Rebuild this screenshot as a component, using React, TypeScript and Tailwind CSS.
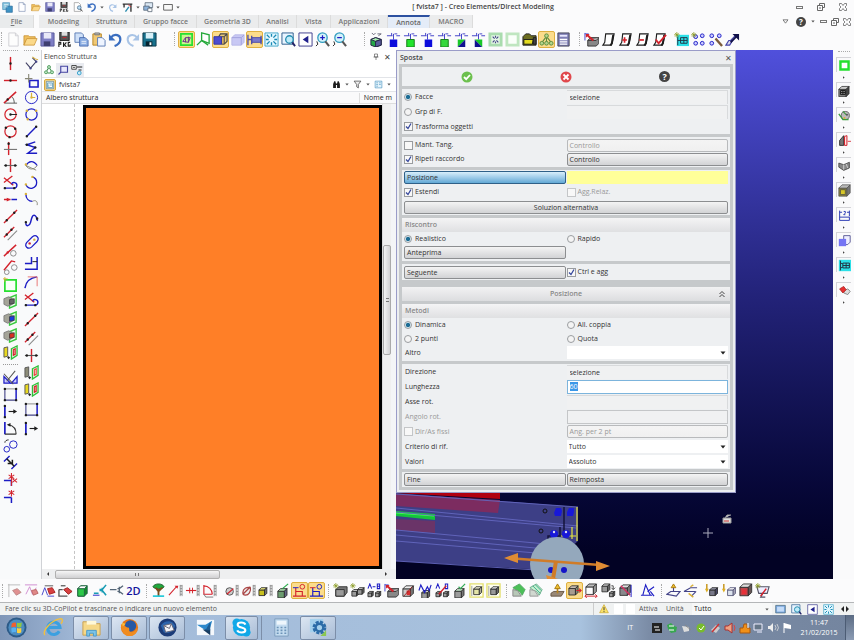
import type { ReactNode } from "react";

/* A shape is [path, stroke, fill, stroke width] on a 16 x 16 grid. */
type Shape = [string, string?, string?, number?];

const R = "#d3222c";
const B = "#1c1cc4";
const K = "#1d1d1d";
const G = "#25e02f";
const Y = "#d9b13a";
const N = "none";

const o = (x: number, y: number, r: number) =>
  `M${x - r} ${y}a${r} ${r} 0 1 0 ${2 * r} 0a${r} ${r} 0 1 0 ${-2 * r} 0`;
const dot = (x: number, y: number, c = K): Shape => [o(x, y, 1.3), N, c];
const box = (x: number, y: number, w: number, h: number) => `M${x} ${y}h${w}v${h}h${-w}z`;
const cube = (x: number, y: number, s: number, front = "#9a9a9a", top = "#d0d0d0", side = "#666", line = "#2a2a2a"): Shape[] => {
  const d = s * 0.4;
  return [
    [box(x, y + d, s, s), line, front, 0.9],
    [`M${x} ${y + d}l${d} ${-d}h${s}l${-d} ${d}z`, line, top, 0.9],
    [`M${x + s} ${y + d}l${d} ${-d}v${s}l${-d} ${d}z`, line, side, 0.9],
  ];
};
const rail: Shape[] = [["M13 2v12M15 2v12M13 3h2M13 6h2M13 9h2M13 12h2", "#777", N, 0.8]];
const axes: Shape = ["M1 4h6M6 1v3M9 2h3M11 4h4M8 2v6", "#3c3cc8", N, 1];
const sheet: Shape[] = [
  ["M5 2h9l-2 10-1 2H2l2-3z", K, "#fff", 1.2],
  ["M13 3l-1.500 9-1.500 2.500", K, N, 2],
];
const spark: Shape = ["M3 0v6M0 3h6M1 1l4 4M5 1l-4 4", "#8a9a20", N, 0.8];
const frame3d = (c: string): Shape[] => [
  ["M7 4l7-3v11l-7 3z", "#37c93d", "#e8ffe8", 1.5],
  ["M1 5l5-2 4 2v6l-5 2-4-2z", "#777", "#a4a498", 0.9],
  ["M7 6l5-1v5l-5 1z", "#333", c, 0.8],
];
const book = (a: string, c: string): Shape[] => [
  ["M1 3l4-1v10l-4 1z", "#555", a, 1],
  ["M9 4l6-3v10l-6 4z", "#2fbf3a", "#e9ffe9", 1.4],
  ["M11 5l2-1v6l-2 1z", c, c === R ? "#f4b0b0" : N, 1.2],
  ["M6 12v3M4.500 13.500h3", K, N, 1],
];

const icons: Record<string, Shape[]> = {
  app: [[box(1, 1, 10, 10), "#4b8fb8", "#8cc8e0"], [box(6, 6, 9, 9), "#2c6c9c", "#3d93c4"], ["M3 4h6M4 7h4", "#fff"]],
  newFile: [["M3 1h7l3 3v11H3z", "#7c8db0", "#fdfdff", 1], ["M10 1v3h3", "#7c8db0", N, 1]],
  newPale: [["M3 1h7l3 3v11H3z", "#cfcfd4", "#fdfdfd", 1], ["M10 1v3h3", "#cfcfd4", N, 1]],
  open: [["M1 4h5l1 1h6v3H4l-3 6z", "#c58c2a", "#f0c060", 0.8], ["M4 7h11l-3 7H1z", "#c99234", "#fbd98a", 0.8]],
  save: [[box(1, 1, 14, 14), "#5a5a9c", "#7d7dc4"], [box(4, 1, 8, 6), N, "#e8e8f8"], [box(4, 10, 7, 5), N, "#3e3e70"]],
  saveTeal: [[box(1, 1, 14, 14), "#0d3a4c", "#17708c"], [box(4, 1, 8, 6), N, "#d8f0f8"], [box(4, 10, 7, 5), N, "#062430"], [box(8, 11, 2, 3), N, "#fff"]],
  savePkg: [[box(3, 0, 10, 9), K, "#555"], [box(5, 0, 6, 4), N, "#ddd"], ["M2 16v-5h2v2H2M7 11v5M10 11l-2 2.500 2 2.500M14 11h-2v4h2v-2", K, N, 1.2], ["M6 6h4", R]],
  preview: [["M2 1h7l3 3v11H2z", "#888", "#fff"], [o(10, 9, 3), "#357", "#b8dcf4"], ["M12 11l3 4", "#444", N, 1.6]],
  undo: [["M3 6c4-5 11-3 10 3-.500 3-3 5-6 6", "#3a6ec0", N, 2.4], ["M1 2v7h7z", N, "#3a6ec0"]],
  redo: [["M13 6c-4-5-11-3-10 3 .500 3 3 5 6 6", "#a9c4e6", N, 2.2], ["M15 2v7H8z", N, "#a9c4e6"]],
  tools: [["M1 3h14M3 3v5M13 2v12", "#333", N, 2], ["M5 14l5-7", "#2b8cae", N, 2], ["M9 4l4 3", R, N, 1.2]],
  windows: [[box(3, 1, 11, 7), "#456", "#dce8f4"], [box(1, 6, 8, 6), "#456", "#8fb4dc"], [box(7, 9, 6, 5), "#456", "#fff"]],
  rectWin: [[box(1, 4, 14, 9), "#555", "#f8f8f8", 1.4]],
  copy: [["M1 1h7l2 2v8H1z", "#5c7cb4", "#cfe0f8"], ["M6 6h6l3 3v6H6z", "#4a6cb0", "#8fb0e4"], ["M8 10h5M8 12h5", "#fff", N, 0.8]],
  paste: [[box(2, 2, 9, 12), "#b88420", "#f0c874"], [box(4, 1, 5, 2), "#777", "#bbb"], ["M7 6h5l3 3v6H7z", "#5c7cb4", "#eef4ff"]],
  wp1: [[box(2, 2, 12, 12), G, "#c7f58c", 1.8], ["M4 10l3-4h5l-2 5zM7 6v5M10 5v6", "#6b2c8c", N, 1]],
  wp2: [["M6 1l8 2v9l-8-3z", "#24a83a", "#fff", 1.4], ["M6 9l-5 5M6 9l7 5", "#24a83a", N, 1.4]],
  wp3: [["M6 5l2-3h7v8l-3 3M12 5l3-3", "#444", "#e8c878", 1.2], [box(9, 5, 3, 8), "#444", "#d8b060"], [box(1, 5, 8, 8), "#3434a4", "#4c4cd0"]],
  wp4: [["M2 6l3-3h10v8l-3 3H2z", "#b8b8e8", "#c8c8f4"], ["M12 6h-10M12 6v8M12 6l3-3", "#a0a0dc"]],
  wp5: [["M5 6h10v5H5z", "#4c4ca8", "#7878cc"], ["M1 3v11M1 8h4M5 4v9M15 4v9", "#4c4ca8", N, 1.4]],
  fit: [[box(1, 1, 14, 14), "#3fa4c8", "#e4f8ff"], ["M3 3l3 3M13 3l-3 3M3 13l3-3M13 13l-3-3M8 2v3M8 11v3M2 8h3M11 8h3", "#1888b4", N, 1.4]],
  zoomBox: [[box(1, 1, 12, 12), "#2c5c8c", "#e8f4ff"], [o(9, 8, 4), "#248cb0", "#bfeaf8", 1.4], ["M12 11l3 4", "#226", N, 2]],
  prev: [[box(1, 1, 14, 14), "#3c3c8c", "#fff"], ["M11 4v8L5 8z", N, "#20208c"]],
  zoomIn: [[o(8, 6, 5), "#2f9cc0", "#d4f2fa", 1.4], ["M8 3.500v5M5.500 6h5", B, N, 1.3], ["M11 10l4 5", "#555", N, 2.2], ["M2 10l1 3-2 2", K]],
  zoomOut: [[o(8, 6, 5), "#2f9cc0", "#d4f2fa", 1.4], ["M5.500 6h5", B, N, 1.3], ["M11 10l4 5", "#555", N, 2.2], ["M2 10l1 3-2 2", K]],
  an0: [["M2 8l5-2 6 2v6l-6 2-5-2z", "#224", "#24a848"], ["M2 8l5 2 6-2-6-2z", "#224", "#a8ecb0"], ["M7 10l6-2v6l-6 2z", "#224", "#5c5c9c"], ["M3 1l2 2 2-2M9 2h4M10 4l3-2", "#667", N, 1]],
  an1: [axes, [box(4, 8, 8, 8), N, "#0c0cdc"]],
  an2: [axes, [box(4, 8, 8, 8), "#187818", "#23e42c"]],
  an3: [axes, [box(5, 8, 8, 8), N, "#0c0cdc"]],
  an4: [axes, [box(4, 8, 8, 8), "#187818", "#35d83c"]],
  an5: [axes, ["M4 8h8l-8 8z", N, "#18c828"], ["M12 8v8H4z", N, "#101090"]],
  an6: [axes, ["M4 8l8 8H4z", N, "#101090"], ["M4 8h8v8z", N, "#18c828"]],
  an7: [[box(2, 2, 12, 12), "#a9dcae", "#e4f8e4", 3], ["M5 5l2 2M11 5L9 7M5 11l2-2M11 11L9 9M8 4v2M8 10v2", "#448", N, 1.2]],
  an8: [[box(2, 2, 12, 12), "#bfe6c0", "#fafffa", 3]],
  an9: [["M1 5l3-3h4l2 2h5v10H1z", K, "#6c6c20"], ["M2 8h10l-1 5H2z", K, "#e4dc20"], ["M12 6h3v7h-3z", K, "#444"]],
  an10: [[o(8, 4, 2), "#5c8c3c", "#b4d48c"], [o(3, 12, 2), "#5c8c3c", "#b4d48c"], [o(13, 12, 2), "#5c8c3c", "#b4d48c"], [o(8, 12, 2), "#5c8c3c", "#b4d48c"], ["M7 6L4 10M9 6l3 4M8 6v4", "#5c8c3c", N, 1.2]],
  an11: [[box(2, 1, 12, 14), "#445", "#7c7cb4"], [box(4, 3, 8, 2), N, "#e8e8ff"], ["M4 8h8M4 10.500h8M4 13h8", "#fff", N, 1.4]],
  hand: [["M4 9l3-3h9v6l-3 3H4z", "#333", "#888"], ["M4 9h9l3-3", "#333", "#bbb"], ["M1 1v8M1 2h4", "#44c"], ["M3 3l7 6", R, N, 2.2], ["M2 2h4l-4 4z", N, R]],
  sheet0: sheet,
  sheetPlus: [...sheet, ["M7 5.500v6M4.500 8.500h5", R, N, 1.8]],
  sheetMinus: [...sheet, ["M4.500 8.500h5", R, N, 1.8]],
  sheetCheck: [...sheet, ["M4 8l3 4 8-9", R, N, 2]],
  table: [[box(3, 3, 13, 12), N, "#2ce0e8"], ["M4 5v9M7 6h7v6H7zM4 9h10M10.500 6v6", "#234"], spark],
  grid1: [[o(5, 5, 2), B, "#ccf"], [o(12, 4, 2), B, "#ccf"], [o(5, 12, 2), B, "#ccf"], [o(12, 12, 2), B, "#ccf"], spark],
  grid2: [[o(4, 4, 2), B, "#ccf"], [o(12, 4, 2), B, "#ccf"], [o(4, 12, 2), B, "#ccf"], ["M8 7l7 8", "#7c5c3c", N, 2.500]],
  arrowUp: [["M1 14l3-5h4l-3 5zM6 9l5-5", "#44a", "#dde", 1.2], ["M8 2h7v7z", N, "#101048"], ["M6 11l6-6", "#101048", N, 2]],

  lV: [["M8 1v14", R, N, 1.5], dot(8, 8)],
  lH: [["M1 8h14", R, N, 1.5], dot(8, 8)],
  lAng: [["M1 14L14 2", R, N, 1.6], ["M2 14h13M9 7c2 1 3 4 3 7", "#555", N, 1], dot(5, 10)],
  lC1: [[o(8, 8, 6), R, N, 1.3], ["M8 8h7", K], dot(8, 8)],
  lC2: [[o(8, 8, 6), R, N, 1.3], dot(3, 4), dot(13, 5), dot(7, 14)],
  lPerp: [["M6 1v14", R, N, 1.5], ["M1 9h14", "#777", N, 1.2], dot(6, 3)],
  lPar: [["M8 1v14", R, N, 1.5], ["M1 8h14", "#666", N, 1.2], dot(3, 8), dot(13, 8)],
  tan1: [["M1 8L10 1M1 3l10 8", R, N, 1.4], ["M1 14h11a3 3 0 1 0-3-4", B, N, 1.5], dot(2, 14), dot(12, 14)],
  arr: [["M1 8h7", R, N, 1.6], ["M9 8h6", B, N, 1.6], ["M4 6l4 2-4 2z", N, R]],
  l2p: [["M1 15L15 1", R, N, 1.4], dot(4, 12), dot(12, 4)],
  lpp: [["M1 12L12 1", R, N, 1.4], ["M5 15l10-10", "#888", N, 1.1], dot(4, 9), dot(9, 4)],
  lt1: [["M1 14L14 2", R, N, 1.5], [o(11, 11, 3), "#888"], dot(5, 10, R)],
  lt2: [["M1 11L9 1l4 1", R, N, 1.5], [o(4, 13, 2.5), "#888"], [o(12, 8, 3), "#888"]],
  greenBox: [[box(2, 3, 12, 12), G, "#f8fff8", 1.8], ["M2 0v5M0 2h5", Y]],
  f3gray: frame3d("#666"), f3blue: frame3d("#1c3ce0"), f3red: frame3d("#d83020"),
  bookYR: book("#e8d820", R), bookGG: book("#8c8c78", "#eb4040"),
  mirror: [["M1 7v7h7z", B, "#ccf", 1.3], ["M9 14h6V7z", B, "#ccf", 1.3], ["M1 4l10 11M13 1L4 12", "#555", N, 1.1]],
  selBox: [["M2 2h12", "#999", N, 1.2], ["M14 2v12", B, N, 1.6], ["M14 14H2V2", "#448", N, 1.2], dot(2, 2), dot(14, 2), dot(2, 14), dot(14, 14)],
  move: [["M2 2v12", B, N, 1.8], ["M6 8h6", K, N, 1.2], ["M11 5.500l4 2.500-4 2.500z", N, K], dot(2, 2), dot(2, 14)],
  rot: [["M2 1v13", B, N, 1.8], ["M2 14h12M14 14c0-5-3-9-8-10", "#333", N, 1.2], ["M4 4l4-2v4z", N, K]],
  scale2: [[o(4, 12, 3), B], [o(11, 7, 4), B], ["M2 5c0-2 2-3 4-3", K]],
  stretch: [["M1 7L7 1M9 15l6-6", B, N, 1.5], ["M4 4l8 8M5 9h5V5", K, N, 1.6]],
  trim1: [["M1 9h8M9 9v6", B, N, 1.6], ["M9 1v14M6 3l6 4M6 7l6-4M10 7l5 4M10 11l5-4", R, N, 1.1]],
  trim2: [["M1 9h8M9 9v6", B, N, 1.6], ["M9 1v7M6 2l6 4M6 6l6-4", R, N, 1.1]],

  pAng: [["M2 7l5 6 6-7-4-4", "#446", N, 1.2], ["M9 1c2 2 4 3 6 3", Y, N, 1.2], dot(7, 13, "#448"), dot(13, 6, "#448")],
  pRect: [[box(6, 8, 9, 7), B, N, 1.7], ["M5 1v9M1 6h8", "#887", N, 1.2]],
  pC1: [[o(8, 8, 6.5), B], ["M8 8V3M8 8h4", Y, N, 1.3], dot(8, 8, Y)],
  pC2: [[o(8, 8, 6), B, N, 1.3], dot(3, 4, Y), dot(13, 4, Y), dot(4, 13, Y)],
  pL: [["M3 13L13 3", B, N, 1.5], dot(3, 13), dot(13, 3)],
  pZ: [["M12 1L3 4l9 3-8 6 10 0", B, N, 1.5], dot(3, 4), dot(12, 7)],
  pArc1: [["M2 8c3-5 8-6 12 0", B, N, 1.4], ["M2 8c3 5 9 5 12 0M2 8l11 5", "#887", N, 1], dot(2, 7, Y)],
  pArc2: [["M9 2c6 2 6 10 0 12-3 1-6-1-7-4", B, N, 1.4], dot(9, 2, Y), dot(2, 10, Y)],
  pArc3: [["M2 2c0 5 3 8 7 8", B, N, 1.5], ["M9 10c3-2 6 0 5 4", "#887"], dot(2, 2, Y)],
  pSp: [["M2 12c0 4 4 3 5-1s2-9 5-7 0 4 3 5", B, N, 1.6], dot(2, 11), dot(14, 7)],
  pEl: [["M3 9l6-6c4-3 8 1 5 5l-6 6c-4 3-8-1-5-5z", B, N, 1.3], dot(6, 10, R), dot(11, 6, Y)],
  pOff: [["M1 8h7V1M1 14h13V1", B, N, 1.6], ["M9 6h5", K]],
  pFil: [["M1 14c1-7 5-11 13-12", B, N, 1.6], ["M4 2h10v10", "#e87070", N, 1]],
  pT: [["M8 1v14", R, N, 1.5], ["M1 8h14", "#555", N, 1.2], dot(3, 8), dot(13, 8)],

  b1: [["M1 2h13M2 1v14", "#bbb"], ["M6 8l5-2 4 4-5 3z", "#b88", "#e09090"]],
  b2: [["M1 2h13M2 12l4-8 3 8 4-7", "#d08cd0"], ["M8 8l5-1 2 4-5 2z", "#b66", "#e08888"]],
  b3: [["M1 13l3-8 3 8M7 14h7", "#44c"], ["M4 3h9", "#555"], ["M7 6l5-1 3 5-6 2z", "#a22", "#d84040"]],
  b4: [["M1 7v7h9M1 7h4", "#555", N, 1.4], ["M6 7l4-2 5 4-4 3z", "#922", "#d84040"], ["M3 3h5", K]],
  greenCube: [["M3 6l3-3h7v8l-3 3H3z", "#264", "#138a2c"], [box(3, 6, 7, 8), "#264", "#2cc848"], ["M3 6l3-3h7l-3 3z", "#264", "#fff"]],
  view1: [["M2 11h5M8 7h3l4-5M8 8h3l4 5M11 5v5", "#189cb4", N, 1.7], ["M1 13h7", B]],
  view2: [["M1 7h7M9 6h2l4-3M9 9h2l4 3M11 4v7", "#567", N, 1.4]],
  tree: [["M2 4c2-4 10-4 12 0-2 3-10 3-12 0z", "#185c28", "#1fa83c"], ["M8 6v8M5 5l3 4 4-4", "#7c4c1c", N, 2], ["M2 14h12", "#22c8d8", N, 1.8]],
  m1: [...rail, ["M1 13L9 4", R, N, 1.2], ["M7 3l4 0-1 3z", N, R]],
  m2: [...rail, ["M1 8h11", R, N, 1.2], ["M5 5v6M8 5v6", R]],
  m3: [...rail, ["M2 2v10h9M2 3c5 0 9 4 9 9", R, N, 1.2], ["M2 12l2 3h8", "#777"]],
  m4: [...rail, [o(6, 9, 4), "#555", "#ccc"], ["M3 12l7-6", R, N, 1.4]],
  m5: [...rail, ["M2 10c0-4 4-6 8-5 1 4-2 8-5 8s-3-1-3-3zM2 12L10 4", "#a44", "#eee", 1.3]],
  m6: [...rail, ...cube(1, 5, 6, "#c8c020", "#f0ec80", "#777")],
  m7: [...cube(3, 6, 7, "#6c9c70", "#a8d8ac", "#668"), ["M8 6l6-5", "#2a4", N, 1.2]],
  hl1: [["M1 14h14M4 14V5M4 9h7v5", R, N, 1.2], [o(11, 4, 2.5), R], ["M1 5h6", B]],
  hl2: [["M1 14h14M4 14V5M4 9h7v5", B, N, 1.2], [o(11, 4, 2.5), B], ["M1 5h6", R]],
  c1: [["M3 7l3-3h9v6l-3 4H3z", "#333", "#777"], [box(3, 7, 9, 7), "#333", "#9a9a9a"], spark],
  c2: [...cube(2, 7, 5), ...cube(8, 5, 5), spark],
  c3: [...cube(1, 9, 4), ...cube(9, 9, 4), ["M1 6l2-5 2 5M6 4h3M11 1v5h2.500v-5zM11 3.500h2", B, N, 1.1]],
  c5: [...cube(2, 3, 8, "#ccc", "#eee", "#777"), [box(6, 8, 4, 5), N, "#d83030"], ["M3 14l9-10", "#922"]],
  c6: [...cube(4, 8, 6), ["M1 8l2-6 4 8 3-6 2 4 2-6", B, N, 1.2]],
  c7: [...cube(1, 9, 4), ...cube(9, 9, 4), ["M1 6l2-5 2 5M11 1v5h2.500v-5z", B, N, 1.1], ["M4 12L12 3", R, N, 1.5]],
  c8: [...cube(3, 6, 7, "#9c9c9c", "#c8e8cc", "#777"), ["M7 4l2 2 5-5", "#3a5", N, 1.3]],
  y1: [[box(1, 1, 14, 14), "#e4e070", "#fffff0", 1.4], ...cube(5, 4, 6, "#e4e4a8", "#f8f8d8", "#aa9"), ["M3 3v11", "#888", N, 0.8]],
  y2: [[box(1, 1, 14, 14), "#e4e070", "#fffff0", 1.4], ...cube(5, 4, 6, "#999", "#eee", "#666"), ["M3 3v11", "#888", N, 0.8]],
  g1: [["M2 5l7-4 6 6-3 6-3-4-3-1z", "#5a6", "#4cc058"], ["M2 7l5 1 4 6H2z", "#888", "#b8c8b8"]],
  g2: [["M2 5l7-4 6 6-3 6-3-4-3-1z", "#6a8", "#c8f0d0"], ["M5 3l8 8M8 2l6 6", "#3a8"], ["M2 7l5 1 4 6H2z", "#999", "#d0d8d0"]],
  up1: [["M1 11l3-2h11l-3 5H1z", "#654", "#987"], ["M8 11V5", "#b88420", N, 1.8], ["M5 6l3-5 3 5z", "#a67a10", "#f0c030"]],
  ext1: [...cube(2, 3, 7, "#a89c90", "#d0c4b8", "#887"), ["M10 8h5M13 6l2 2-2 2", R, N, 1.3]],
  ext2: [...cube(2, 1, 8, N, "#bbb", "#999"), ["M1 14h13M3 12l-2 2 2 2M12 12l2 2-2 2", R, N, 1]],
  ext3: [...cube(1, 1, 6), ...cube(9, 9, 4), ["M11 3h2v4M11 5l2 2 2-2", "#444"]],
  ext4: [...cube(2, 2, 8, "#88888c", "#ddd", "#777"), ["M3 3l10 10", "#d03060", N, 1.6], ["M14 2v13", B]],
  tri: [["M3 13L6 2l5 11zM1 13h12M8 9l7-5M11 9l4 5", B, N, 1.2]],
  ax1: [["M1 12l4-3h10l-4 5zM8 9V4", "#448", N, 1.2], ["M5.500 5l2.500-4 2.500 4z", "#a67a10", "#f0c030"]],
  ax2: [["M1 9l7-4h7M1 9h12M9 14l5-5", "#448", N, 1.2], ["M8 4l3-2M6 11l5 4", Y, N, 1.6]],
  ax3: [...cube(6, 5, 6, "#778", "#99a", "#446"), ["M3 1v7", "#c89820", N, 1.6], ["M1 6h4l-2 4z", N, "#e0b020"]],
  ax4: [...cube(7, 5, 6, "#dde4ee", "#fff", "#aab", "#557"), ["M3 1v7", "#c89820", N, 1.6], ["M1 6h4l-2 4z", N, "#e0b020"]],
  ax5: [...cube(2, 1, 9, "#b8484c", "#ddd", "#655"), [box(4, 7, 5, 5), N, "#e83038"]],
  ax6: [["M2 4h13l-2 7H4zM8 12l-2 3h5", "#556", "#eef", 1.2], ["M6 14l6-8", R, N, 1.6], spark],

  r1: [[box(3, 3, 10, 10), G, "#fff", 3]],
  r2: [...cube(1, 3, 9, "#888", "#ccc", "#444"), ["M3 8h6v5H3zM6 8v5M3 10.500h6", K, N, 1.2]],
  r3: [[o(9, 8, 5), "#555", "#bbb"], ["M1 6l5 7h7", "#3c9c3c", N, 1.6], ["M6 3l4 4", "#3c9c3c", N, 1.4], dot(8, 11, Y), dot(11, 7, "#555")],
  r4: [["M2 14V8l5-6v12z", K, "#777"], ["M8 3l3-1v12H8z", R, "#fdd", 1.2], ["M12 9h4", R]],
  r5: [["M1 5l6 2 7-3v7l-7 3-6-4z", "#444", "#888"], ["M7 7v6M10 6l2 5", "#ddd"]],
  r6: [...cube(1, 1, 10, "#888040", "#bbb", "#777", "#555"), [box(3, 7, 6, 6), "#554", "#d8c828"]],
  r7: [["M2 2v12M14 2v7M2 4h3M11 4h3M7 3h2v2l-2 2h2M2 10h12v4H2", "#2c3cb4", N, 1.2]],
  r8: [["M7 2h8v8l-3 3H7z", "#448", "#eef"], [box(1, 6, 9, 9), N, "#7474f4"]],
  r9: [[box(1, 1, 15, 14), N, "#2ce0e8"], ["M3 2v12M6 5h8v6H6zM3 5l3 1M3 11l3-1M6 8h8M10 5v6", "#234", N, 1.2]],
  r10: [["M8 8l4-2 3 3-3 4-5-2z", "#777", "#ddd"], ["M2 6l5-3 3 4-4 4z", "#a22", "#e83030"]],

  t1: [[o(8, 4, 2), "#3a8c4a", "#bfe8c4"], [o(4, 11, 2), "#3a8c4a", "#bfe8c4"], [o(12, 11, 2), "#3a8c4a", "#bfe8c4"], ["M7 6l-2 3M9 6l2 3M6 12h4", "#3a8c4a", N, 1.4]],
  t2: [["M5 3h9v8H5zM2 14l3-3M5 11V8", "#4444a0", "#e8e8fc", 1.5]],
  t3: [[box(1, 2, 6, 5), K, "#eee"], ["M3 4.500h2M8 4h7M10 8h4", K, N, 1.3], [o(11, 12, 2.5), "#2f9cc8", "#c8ecfa", 1.2]],
  part: [[box(2, 2, 12, 12), "#578", "#cfe6f0"], [box(4, 5, 8, 7), "#3888a8", "#fff"], ["M6 7v4M8 8h3", "#3888a8"]],
  binoc: [["M2 7l2-5h2l1 4h2l1-4h2l2 5v7H9V9H7v5H2z", N, K]],
  funnel: [["M2 2h12L9.500 8v6l-3-2V8z", "#444", "#eee", 1.3]],
  list: [[box(2, 2, 12, 12), "#3888b8", "#e4f4fc"], ["M4 5h3M4 8h3M4 11h3M9 5h3M9 8h3", "#3888b8"]],
  pin: [["M5 2h6v6H5zM3 8h10M8 8v6", "#555", N, 1.3]],
  warn: [["M8 1l7 13H1z", "#c8a020", "#fbe36a"], ["M8 5v5M8 11.500v1.500", "#333", N, 1.5]],
  st1: [[box(1, 2, 14, 11), "#467", "#7ca8e0"], [box(3, 4, 10, 7), N, "#c4dcf8"]],
};

function Icon({ name, size = "size-[15px]" }: { name: string; size?: string }) {
  return (
    <svg viewBox="0 0 16 16" className={`${size} shrink-0`} aria-hidden="true">
      {icons[name].map(([d, s = K, f = N, w = 1], i) => (
        <path key={i} d={d} stroke={s} fill={f} strokeWidth={w} />
      ))}
    </svg>
  );
}

function Tool({ name, on = false, tall = false }: { name: string; on?: boolean; tall?: boolean }) {
  return (
    <button
      aria-label={name}
      className={`flex w-[17px] shrink-0 items-center justify-center rounded-xs ${tall ? "h-[22px]" : "h-[17px]"} ${
        on ? "border border-[#dfb040] bg-[#fbdc8c]" : ""
      }`}
    >
      <Icon name={name} />
    </button>
  );
}

function Tools({ names, on = [] }: { names: string; on?: string[] }) {
  return (
    <div className="flex shrink-0">
      {names.split(" ").map((n, i) => (
        <Tool key={i} name={n} on={on.includes(n)} />
      ))}
    </div>
  );
}

function Grip({ w }: { w: string }) {
  return (
    <div className={`${w} flex h-[14px] shrink-0 justify-end pr-[3px]`}>
      <div className="border-l border-dotted border-[#aaa]" />
    </div>
  );
}

function Caret({ small = false }: { small?: boolean }) {
  return (
    <svg viewBox="0 0 6 4" className={small ? "mx-px h-[3px] w-1 shrink-0" : "h-1 w-[6px] shrink-0"} aria-hidden="true">
      <path d="M0.500 0.500h5L3 3.500z" fill={small ? "#555" : "#222"} />
    </svg>
  );
}

const quick = ["newFile", "open", "save", "savePkg", "preview", "undo"];

function WindowButtons() {
  return (
    <>
      <button aria-label="Riduci" className="h-[3px] w-[7px] border border-[#777]" />
      <button aria-label="Ripristina" className="flex size-2">
        <svg viewBox="0 0 8 8" className="size-2"><path d="M2.500 2V.500h5v4H6M.500 2.500h5v5h-5zM2 5h2" fill="none" stroke="#666" /></svg>
      </button>
      <button aria-label="Chiudi" className="flex size-2">
        <svg viewBox="0 0 8 8" className="size-2"><path d="M.500.500h2L4 2.500 5.500.500h2v2L6 4l1.500 1.500v2h-2L4 5.500 2.500 7.500h-2v-2L2 4 .500 2.500z" fill="none" stroke="#666" strokeWidth=".8" /></svg>
      </button>
    </>
  );
}

function TitleBar() {
  return (
    <header className="grid h-[14px] shrink-0 grid-cols-[1fr_auto_1fr] items-center">
      <div className="flex items-center">
        <span className="flex w-[15px] justify-center"><Icon name="app" size="size-[11px]" /></span>
        {quick.map((n) => (
          <button key={n} aria-label={n} className="flex w-[14px] justify-center"><Icon name={n} size="size-[10px]" /></button>
        ))}
        <Caret small />
        <button aria-label="redo" className="flex w-[14px] justify-center"><Icon name="redo" size="size-[9px]" /></button>
        <button aria-label="tools" className="flex w-4 justify-center"><Icon name="tools" size="size-[11px]" /></button>
        <Caret small />
        <button aria-label="windows" className="flex w-[14px] justify-center"><Icon name="windows" size="size-[11px]" /></button>
        <Caret small />
        <button aria-label="rectWin" className="flex w-[14px] justify-center"><Icon name="rectWin" size="size-[10px]" /></button>
        <Caret small />
      </div>
      <h1 className="pl-28 font-semibold text-[#444]">[ fvista7 ] - Creo Elements/Direct Modeling</h1>
      <div className="flex items-center justify-end gap-[14px] pr-[7px]"><WindowButtons /></div>
    </header>
  );
}

const tabs: [string, string][] = [
  ["Modeling", "w-[50px]"], ["Struttura", "w-[46px]"], ["Gruppo facce", "w-[62px]"], ["Geometria 3D", "w-[62px]"],
  ["Analisi", "w-[38px]"], ["Vista", "w-[34px]"], ["Applicazioni", "w-[57px]"], ["Annota", "w-[42px]"], ["MACRO", "w-[43px]"],
];

function Ribbon() {
  return (
    <nav className="flex h-[14px] shrink-0 items-stretch pt-px font-semibold text-[#777]">
      <button className="mr-[5px] w-[34px] border-r border-[#ddd] bg-[#e9ebec]"><u>F</u>ile</button>
      {tabs.map(([t, w]) => (
        <button
          key={t}
          className={`${w} whitespace-nowrap border-r border-[#dcdcdc] ${
            t === "Annota" ? "border-t-2 border-t-[#2c50a0] bg-[#e4ecf8] leading-none text-[#666]" : "bg-[#ebeced]"
          }`}
        >
          {t}
        </button>
      ))}
      <div className="flex flex-1 items-center justify-end gap-[4px] pr-[3px]">
        <svg viewBox="0 0 8 6" className="h-[5px] w-[7px]" aria-hidden="true"><path d="M1 1h6L4 5z" fill="none" stroke="#666" /></svg>
        <button aria-label="Guida" className="ml-[3px] flex size-[10px] items-center justify-center rounded-full bg-[#444] text-[8px] font-bold text-white">?</button>
        <Caret small />
        <WindowButtons />
      </div>
    </nav>
  );
}

function TopToolbar() {
  return (
    <div className="flex h-[22px] shrink-0 items-center overflow-hidden">
      <Grip w="w-[5px]" />
      <Tools names="newPale open save savePkg copy paste undo redo saveTeal" />
      <Grip w="w-5" />
      <Tools names="wp1 wp2 wp3 wp4 wp5 fit zoomBox prev zoomIn zoomOut" on={["wp1", "wp3", "wp5"]} />
      <Grip w="w-5" />
      <Tools names="an0 an1 an2 an3 an4 an5 an6 an7 an8 an9 an10 an11" on={["an10"]} />
      <Grip w="w-[11px]" />
      <Tools names="hand sheet0 sheetPlus sheetMinus sheetCheck" />
      <div className="pl-[5px]"><Tools names="table grid1 grid2 arrowUp" /></div>
    </div>
  );
}

const leftA = "lV lH lAng lC1 lC2 lPerp lPar tan1 arr l2p lpp lt1 lt2 greenBox f3gray f3blue f3red bookYR".split(" ");
const leftB = "mirror selBox move rot scale2 stretch trim1 trim2".split(" ");
const leftC = "pAng pRect pC1 pC2 pL pZ pArc1 pArc2 pArc3 pSp pEl pOff pFil tan1 l2p lpp pT bookGG bookYR selBox move".split(" ");
const tallC = [9, 10, 11, 14, 19];

function LeftTools() {
  return (
    <aside className="flex shrink-0 bg-[#f9fafb]">
      <div className="flex w-[21px] flex-col items-center">
        <div className="h-[5px] w-[15px] border-t border-dotted border-[#aaa]" />
        {leftA.map((n, i) => <Tool key={i} name={n} />)}
        <div className="my-[3px] h-[2px] w-[15px] border-t border-dotted border-[#999]" />
        {leftB.map((n, i) => <Tool key={i} name={n} />)}
      </div>
      <div className="flex w-[21px] flex-col items-center border-r border-[#d0d2d6]">
        <div className="h-[5px] w-[15px] border-t border-dotted border-[#aaa]" />
        {leftC.map((n, i) => <Tool key={i} name={n} tall={tallC.includes(i)} />)}
      </div>
    </aside>
  );
}

function TreePanel() {
  return (
    <section className="flex min-w-0 flex-[354] flex-col bg-white">
      <div className="flex h-[13px] items-center justify-between pr-px pl-[2px] text-[#444]">
        <h2>Elenco Struttura</h2>
        <div className="flex items-center gap-[3px] pr-1">
          <button aria-label="Blocca" className="flex"><Icon name="pin" size="size-2" /></button>
          <button aria-label="Chiudi pannello" className="flex size-2 items-center justify-center text-[8px] text-[#444]">✕</button>
        </div>
      </div>
      <div className="flex h-[14px] items-center">
        {["t1", "t2", "t3"].map((n, i) => (
          <button key={n} aria-label={n} className={`flex h-[14px] w-[14px] items-center justify-center ${i ? "bg-[#e9ebf0]" : "bg-white"}`}>
            <Icon name={n} size="size-3" />
          </button>
        ))}
      </div>
      <div className="flex h-[15px] items-center justify-between border-y border-[#e2e4e8] pr-1 pl-[2px] text-[#333]">
        <span className="flex items-center gap-[3px]">
          <span className="flex size-3 items-center justify-center rounded-xs border border-[#d8a83c] bg-[#fbdc8c]"><Icon name="part" size="size-[10px]" /></span>
          fvista7
        </span>
        <span className="flex items-center gap-[3px]">
          <button aria-label="Cerca" className="flex"><Icon name="binoc" size="size-[9px]" /></button><Caret small />
          <button aria-label="Filtra" className="flex"><Icon name="funnel" size="size-[9px]" /></button><Caret small />
          <button aria-label="Colonne" className="flex"><Icon name="list" size="size-[9px]" /></button><Caret small />
        </span>
      </div>
      <div className="flex h-3 items-center justify-between border-b border-[#ddd] bg-[#fafafb] pr-1 pl-1 text-[#222]">
        <span>Albero struttura</span>
        <span className="border-l border-[#ddd] pl-1">Nome m</span>
      </div>
      <div className="flex min-h-0 flex-1">
        <div className="w-[33px] shrink-0 border-r border-dashed border-[#c4c4c4]" />
        <div className="mt-px ml-2 flex-1 border-[3px] border-black bg-[#ff7f27]" />
        <div className="flex w-[9px] shrink-0 flex-col items-center border-l border-[#ddd] bg-[#f0f0f0]">
          <div className="flex-[141]" />
          <div className="flex w-2 flex-[109] items-center justify-center rounded-xs border border-[#aaa] bg-linear-to-r from-[#f4f4f4] to-[#d2d2d4]">
            <div className="h-1 w-[3px] border-y border-[#777]" />
          </div>
          <div className="flex-[214]" />
        </div>
        <div className="w-[5px] shrink-0 bg-[#f4f5f7]" />
      </div>
      <div className="flex h-[10px] shrink-0 items-center bg-[#eeeff0] pr-1">
        <svg viewBox="0 0 4 6" className="mx-1 h-[6px] w-1" aria-hidden="true"><path d="M3 1v4L1 3z" fill="#333" /></svg>
        <div className="ml-px flex h-[9px] flex-[165] items-center justify-center rounded-xs border border-[#b0b0b0] bg-linear-to-b from-[#f6f6f6] to-[#d0d0d2]">
          <div className="h-[3px] w-1 border-x border-[#777]" />
        </div>
        <div className="flex-[162]" />
        <svg viewBox="0 0 4 6" className="mx-1 h-[6px] w-1" aria-hidden="true"><path d="M1 1v4l2-2z" fill="#333" /></svg>
      </div>
    </section>
  );
}

/* ---- Dialog parts ---- */

function Panel({ children, pad = "" }: { children: ReactNode; pad?: string }) {
  return <div className={`grid grid-cols-2 gap-x-px bg-[#eef0f2] pr-[2px] pl-[2px] ${pad}`}>{children}</div>;
}

function Radio({ name, label, on = false, h = "h-[14px]" }: { name: string; label: string; on?: boolean; h?: string }) {
  return (
    <label className={`flex ${h} items-center gap-[3px]`}>
      <input
        type="radio"
        name={name}
        defaultChecked={on}
        className="size-2 shrink-0 appearance-none rounded-full border border-[#9a9da0] bg-[#f4f4f4] checked:bg-[radial-gradient(circle,#1c6c94_40%,#cfe4ee_60%)]"
      />
      {label}
    </label>
  );
}

function Check({ label, on = false, off = false, h = "h-[14px]" }: { label: string; on?: boolean; off?: boolean; h?: string }) {
  return (
    <label className={`flex ${h} items-center gap-[2px] ${off ? "text-[#999]" : ""}`}>
      <span className="grid size-[9px] shrink-0">
        <input type="checkbox" defaultChecked={on} disabled={off} className="peer size-[9px] appearance-none border border-[#9a9da0] bg-[#f8f8f8] [grid-area:1/1] disabled:border-[#c4c6c8]" />
        <svg viewBox="0 0 9 9" className="pointer-events-none hidden size-[9px] [grid-area:1/1] peer-checked:block" aria-hidden="true">
          <path d="M2 4.500L4 6.500 7 1.500" fill="none" stroke="#36489c" strokeWidth="1.300" />
        </svg>
      </span>
      {label}
    </label>
  );
}

const looks = {
  plain: "border-[#8c8e90] from-[#f4f4f4] to-[#d2d3d5] text-left",
  wide: "col-span-2 border-[#8c8e90] from-[#f4f4f4] to-[#d2d3d5] text-center",
  active: "border-[#2f6088] from-[#d8eefb] to-[#62a9d6] text-left",
  off: "border-[#b8babc] from-[#f4f4f4] to-[#f0f0f0] text-left text-[#999]",
};

function Push({ children, look = "plain" }: { children: ReactNode; look?: keyof typeof looks }) {
  return (
    <button type="button" className={`h-[13px] self-center rounded-xs border bg-linear-to-b px-[2px] leading-none ${looks[look]}`}>
      {children}
    </button>
  );
}

function Field({ label, value = "" }: { label: string; value?: string }) {
  return <input aria-label={label} readOnly value={value} className="h-[14px] w-full min-w-0 self-center border-t border-r border-[#d8dadc] bg-[#f0f1f2] px-[3px] outline-none" />;
}

function Drop({ id, options }: { id: string; options: string[] }) {
  return (
    <div className="grid h-[13px] items-center self-center bg-white">
      <select id={id} className="h-[13px] w-full appearance-none px-[2px] outline-none [grid-area:1/1]">
        {options.map((x) => <option key={x}>{x}</option>)}
      </select>
      <span className="pointer-events-none mr-[2px] justify-self-end [grid-area:1/1]"><Caret /></span>
    </div>
  );
}

function Head({ children }: { children: ReactNode }) {
  return <h3 className="col-span-2 -mx-[2px] flex h-[14px] items-center bg-linear-to-b from-[#f4f4f5] to-[#dfe0e2] px-[3px] font-semibold text-[#888]">{children}</h3>;
}

function Dialog() {
  return (
    <form className="absolute top-0 left-0 w-[340px] border border-[#9a9cc8] bg-[#eceef0] pb-[2px] text-[#333]" onSubmit={(e) => e.preventDefault()}>
      <div className="flex h-[13px] items-center justify-between pr-[3px] pl-[3px]">
        <h2 className="font-semibold text-[#444]">Sposta</h2>
        <button type="button" aria-label="Chiudi Sposta" className="flex text-[8px] text-[#555]">✕</button>
      </div>
      <div className="mx-[2px] flex flex-col gap-[3px] bg-[#c6c9cb] p-[3px]">
        <div className="grid h-[19px] grid-cols-3 place-items-center bg-[#eef0f2] px-4">
          <button type="button" aria-label="Conferma">
            <svg viewBox="0 0 12 12" className="size-3"><circle cx="6" cy="6" r="5.500" fill="#6cc04e" /><path d="M3 6l2.200 2.200L9 4" fill="none" stroke="#fff" strokeWidth="1.800" /></svg>
          </button>
          <button type="button" aria-label="Annulla">
            <svg viewBox="0 0 12 12" className="size-3"><circle cx="6" cy="6" r="5.500" fill="#e0484c" /><path d="M3.500 3.500l5 5M8.500 3.500l-5 5" fill="none" stroke="#fff" strokeWidth="1.800" /></svg>
          </button>
          <button type="button" aria-label="Aiuto" className="flex size-[11px] items-center justify-center rounded-full bg-[#444] text-[9px] font-bold text-white">?</button>
        </div>
        <Panel>
          <Radio name="tipo" label="Facce" on h="h-[15px]" />
          <Field label="Selezione facce" value="selezione" />
          <Radio name="tipo" label="Grp di F." h="h-[15px]" />
          <Field label="Selezione gruppo" />
          <Check label="Trasforma oggetti" on h="h-[15px]" />
        </Panel>
        <Panel pad="py-px">
          <Check label="Mant. Tang." />
          <Push look="off">Controllo</Push>
          <Check label="Ripeti raccordo" on />
          <Push>Controllo</Push>
        </Panel>
        <Panel pad="auto-rows-[15px]">
          <Push look="active">Posizione</Push>
          <div className="h-[13px] self-center bg-[#ffff99]" />
          <Check label="Estendi" on />
          <Check label="Agg.Relaz." off />
          <Push look="wide">Soluzion alternativa</Push>
        </Panel>
        <Panel pad="pb-[2px]">
          <Head>Riscontro</Head>
          <Radio name="riscontro" label="Realistico" on />
          <Radio name="riscontro" label="Rapido" />
          <Push>Anteprima</Push>
        </Panel>
        <Panel pad="py-px">
          <Push>Seguente</Push>
          <Check label="Ctrl e agg" on />
        </Panel>
        <button type="button" className="mt-1 grid h-[14px] grid-cols-[1fr_auto_1fr] items-center bg-linear-to-b from-[#f2f2f3] to-[#dcdddf] px-1 font-semibold text-[#888]">
          <span className="col-start-2">Posizione</span>
          <svg viewBox="0 0 8 8" className="size-2 justify-self-end" aria-hidden="true"><path d="M1.500 4L4 1.500 6.500 4M1.500 7L4 4.500 6.500 7" fill="none" stroke="#444" /></svg>
        </button>
        <Panel pad="pb-[2px]">
          <Head>Metodi</Head>
          <Radio name="metodo" label="Dinamica" on />
          <Radio name="metodo" label="All. coppia" />
          <Radio name="metodo" label="2 punti" />
          <Radio name="metodo" label="Quota" />
          <label htmlFor="altro" className="flex items-center px-px">Altro</label>
          <Drop id="altro" options={[""]} />
        </Panel>
        <Panel pad="auto-rows-[15px] items-center">
          <span className="px-px">Direzione</span>
          <Field label="Direzione" value="selezione" />
          <label htmlFor="lung" className="px-px">Lunghezza</label>
          <input
            id="lung"
            defaultValue="60"
            autoFocus
            onFocus={(e) => e.target.select()}
            className="h-[14px] w-full min-w-0 border border-[#7cb4dc] bg-white px-[2px] outline-none selection:bg-[#3b97e8] selection:text-white"
          />
          <span className="px-px">Asse rot.</span>
          <Field label="Asse rot." />
          <label htmlFor="ang" className="px-px text-[#999]">Angolo rot.</label>
          <input id="ang" disabled className="h-[14px] w-full min-w-0 border border-[#c4c6c8] bg-[#f0f1f2]" />
          <Check label="Dir/As fissi" off />
          <Push look="off">Ang. per 2 pt</Push>
          <label htmlFor="crit" className="px-px">Criterio di rif.</label>
          <Drop id="crit" options={["Tutto"]} />
          <label htmlFor="val" className="px-px">Valori</label>
          <Drop id="val" options={["Assoluto"]} />
        </Panel>
        <Panel pad="py-px">
          <Push>Fine</Push>
          <Push>Reimposta</Push>
        </Panel>
      </div>
    </form>
  );
}

function Scene() {
  return (
    <svg viewBox="0 0 345 98" className="absolute bottom-0 left-0 h-[98px] w-[345px]" aria-hidden="true">
      <path d="M0 12L182 26V60L150 89 0 80z" fill="#3d3f86" />
      <path d="M0 12h104v6z" fill="#b00010" />
      <path d="M0 13l104 6-2 13L0 25z" fill="#7c2c60" />
      <path d="M0 38l39 2v12L0 49z" fill="#6a3468" />
      <path d="M0 30l39 3v6L0 35z" fill="#14c43c" />
      <path d="M0 32l38 3" stroke="#40ff50" />
      <path d="M0 13l182 13M0 27l182 18M0 31l180 16M0 49l150 14M0 54l150 14M0 60l140 12M0 80l140 9" stroke="#6468c0" strokeWidth=".9" />
      <path d="M168 26v30M164 46v9h-12v8" stroke="#14143c" strokeWidth="1.500" fill="none" />
      <path d="M181 26v34M176 46v12M165 55h15M181 45v10" stroke="#e8e83c" strokeWidth="1.200" fill="none" />
      <g fill="#1818d8"><path d="M160 27h5l1 3-1 5h-6l-1-3zM173 27h5v4l-1 4h-6v-4z" /><circle cx="158" cy="53" r="4" /><circle cx="170" cy="53" r="4" /></g>
      <g fill="#dde"><circle cx="158" cy="51" r="1.200" /><circle cx="170" cy="51" r="1.200" /></g>
      <g fill="none" stroke="#111"><circle cx="149" cy="30" r="2" /><circle cx="145" cy="50" r="2" /></g>
      <circle cx="161" cy="83" r="27" fill="#94a8bc" />
      <g fill="#1414c8"><circle cx="155" cy="89" r="3" /><circle cx="168" cy="89" r="3" /></g>
      <path d="M118 77.500L204 84" stroke="#d07c28" strokeWidth="2.500" />
      <path d="M108 77l14-5v10zM214 85l-14-5v10z" fill="#e08c34" />
      <path d="M160 80l-3 18" stroke="#d07c28" strokeWidth="4" />
      <path d="M150 94l12 4h-11z" fill="#e08c34" />
      <path d="M307 52h10M312 47v10" stroke="#aab" />
      <path d="M327 37h8v5h-8zM329 37l2-3h4" stroke="#999" fill="#ddd" /><path d="M328 40h5" stroke="#c33" />
    </svg>
  );
}

const right = ["r1", "r2", "r3", "r4", "r5", "r6", "r7", "r8", "r9", "r10"];

function RightTools() {
  return (
    <aside className="flex w-[21px] shrink-0 flex-col items-center bg-[#fafafb] pt-px">
      <div className="h-[6px] w-3 border-t border-dotted border-[#aaa]" />
      {right.map((n) => (
        <button key={n} aria-label={n} className="flex h-[25px] flex-col items-center gap-1">
          <span className="flex size-[15px] items-center justify-center border-t border-l border-[#d4d4d8]"><Icon name={n} size="size-[13px]" /></span>
          <svg viewBox="0 0 3 4" className="h-[3px] w-[2px]" aria-hidden="true"><path d="M0 0v4l2.500-2z" fill="#444" /></svg>
        </button>
      ))}
    </aside>
  );
}

function BottomToolbar() {
  return (
    <div className="flex h-[23px] shrink-0 items-center overflow-hidden bg-[#fbfbfc]">
      <Grip w="w-[6px]" />
      <Tools names="b1 b2 b3 b4 greenCube view1 view2" />
      <button className="w-[17px] shrink-0 text-[11px] leading-none font-semibold text-[#14149c]">2D</button>
      <Grip w="w-2" />
      <Tools names="tree m1 m2 m3" />
      <div className="pl-[5px]"><Tools names="m4 m5 m6 m7 hl1 hl2" on={["hl1", "hl2"]} /></div>
      <Grip w="w-[7px]" />
      <Tools names="c1 c2 c3 hand c5" />
      <Tools names="c6 c7 c8 y1 y2" />
      <Grip w="w-2" />
      <Tools names="g1 g2" />
      <div className="pl-[5px]"><Tools names="up1 ext1 ext2 ext3 ext4" on={["ext1"]} /></div>
      <div className="pl-[5px]"><Tools names="tri" /></div>
      <Grip w="w-[9px]" />
      <Tools names="ax1 ax2" />
      <div className="pl-1"><Tools names="ax3 ax4 ax5 ax6" /></div>
    </div>
  );
}

function StatusBar() {
  return (
    <footer className="flex h-[13px] shrink-0 items-center border-t border-[#b4b6b8] bg-[#f0f2f2] pl-[5px] text-[#555]">
      <span className="flex-1">Fare clic su 3D-CoPilot e trascinare o indicare un nuovo elemento</span>
      <span className="flex h-full w-[21px] items-center justify-center border-l border-[#ccc]"><Icon name="warn" size="size-[10px]" /></span>
      <span className="h-[10px] w-[9px] bg-white" />
      <span className="ml-[3px] h-[10px] w-[9px] bg-white" />
      <span className="ml-1 w-[27px]">Attiva</span>
      <label htmlFor="unita" className="w-[26px]">Unità</label>
      <div className="grid w-[80px] items-center bg-[#f7f8f8] text-[#222]">
        <select id="unita" className="h-[12px] w-full appearance-none px-[2px] outline-none [grid-area:1/1]"><option>Tutto</option></select>
        <span className="pointer-events-none mr-[2px] justify-self-end [grid-area:1/1]"><Caret small /></span>
      </div>
      {["st1", "zoomBox", "prev", "fit"].map((n) => (
        <button key={n} aria-label={n} className="flex w-4 justify-center"><Icon name={n} size="size-[11px]" /></button>
      ))}
      <svg viewBox="0 0 10 8" className="mx-1 h-2 w-[10px]" aria-hidden="true"><path d="M4 1v6L1 4zM6 1v6l3-3z" fill="#222" /></svg>
    </footer>
  );
}

function TaskButton({ label, on = false, w = "w-[36px]", children }: { label: string; on?: boolean; w?: string; children: ReactNode }) {
  return (
    <button aria-label={label} className={`flex h-6 ${w} shrink-0 items-center justify-center rounded-xs border ${on ? "border-[#7c8ea8] bg-linear-to-br from-[#dce6f2] to-[#a8bcd6]" : "border-transparent"}`}>
      <svg viewBox="0 0 22 22" className="size-[21px]" aria-hidden="true">{children}</svg>
    </button>
  );
}

function Taskbar() {
  return (
    <div className="flex h-[25px] shrink-0 items-center gap-[2px] bg-[linear-gradient(to_right,#7f96b8,#a3bbd9_10%,#a8c2de_68%,#7b8ca6_76%,#74859f)]">
      <TaskButton label="Start" w="w-[33px]">
        <circle cx="11" cy="11" r="10.500" fill="#2c5a88" /><circle cx="11" cy="11" r="8.500" fill="#4c8cc0" />
        <path d="M6 7q2-2 4.500-1v4.500q-2.500-1-5 .500z" fill="#f06030" /><path d="M11.500 6q3 1 5-.500l-.500 5q-2 1-4.500 0z" fill="#90c840" />
        <path d="M5.500 12q2.500-1.500 5-.500V16q-2-1-4.500.500z" fill="#58b0f0" /><path d="M11.500 11.500q2 1 4.500 0v4.500q-2 1.500-4.500.500z" fill="#fcd040" />
      </TaskButton>
      <TaskButton label="Internet Explorer">
        <path d="M17 15a6.500 6.500 0 1 1 .800-4H6" fill="none" stroke="#3ca0e0" strokeWidth="3.200" />
        <path d="M2 19C-1 15 8 4 17 2c4-1 4 2 2 5" fill="none" stroke="#f0c040" strokeWidth="1.500" />
      </TaskButton>
      <TaskButton label="Esplora risorse" on>
        <path d="M2 5h7l1 2h10v12H2z" fill="#f6d888" stroke="#c8a050" /><path d="M6 4h10v4H6z" fill="#fff8d8" /><path d="M6 20v-6h10v6h-3v-3H9v3z" fill="#7cc4e8" stroke="#4898c8" />
      </TaskButton>
      <TaskButton label="Firefox" on>
        <circle cx="11" cy="11" r="9" fill="#e87818" /><circle cx="12" cy="9.500" r="6" fill="#2858a4" /><path d="M2 8c4-1 4 3 8 3 2 2-1 4 3 5 3 0 5-2 6-5 1 5-3 9-8 9S2 15 2 8z" fill="#f08c20" /><path d="M3 6l4 1-3 3z" fill="#f8c040" />
      </TaskButton>
      <TaskButton label="Thunderbird" on>
        <circle cx="11" cy="11" r="9.500" fill="#1c3c78" /><path d="M4 9c4-6 12-6 15 0-2 8-8 9-12 7z" fill="#2c64ac" /><path d="M7 9l8-2 3 7-9 2z" fill="#f4f4f8" stroke="#667" /><path d="M7 9l6 3 2-5" fill="none" stroke="#667" />
      </TaskButton>
      <TaskButton label="Direct Modeling">
        <path d="M2 3h18v16H2z" fill="#f4f8fc" /><path d="M2 8h9l7-4-2 7-5 3z" fill="#2c88cc" /><path d="M8 13h8v6z" fill="#183c60" /><path d="M11 14l5-9v9z" fill="#1c5c94" />
      </TaskButton>
      <TaskButton label="Skype" on w="w-[33px]">
        <circle cx="11" cy="11" r="9" fill="#10a8e8" /><circle cx="6" cy="6" r="4.500" fill="#10a8e8" /><circle cx="16" cy="16" r="4.500" fill="#10a8e8" />
        <path d="M15 8c-1-3-8-3-8 0 0 4 8 2 8 6 0 3-7 3-8.500 0" fill="none" stroke="#fff" strokeWidth="2.200" />
      </TaskButton>
      <div className="h-6 w-[2px] border-r border-[#7c8ea8]" />
      <TaskButton label="Calcolatrice" w="w-[34px]">
        <path d="M4 2h14v18H4z" fill="#c4dcf0" stroke="#7c9cbc" /><path d="M6 4h10v4H6z" fill="#eef6fc" /><path d="M6 11h10M6 14h10M6 17h10" stroke="#6c94b8" strokeWidth="1.600" strokeDasharray="2 2" />
      </TaskButton>
      <TaskButton label="Creo" on>
        <path d="M2 2h14v14H2z" fill="#a4d0ec" /><circle cx="12" cy="11" r="5.500" fill="none" stroke="#2c6ca8" strokeWidth="3.500" strokeDasharray="3 1.300" /><circle cx="12" cy="11" r="4" fill="none" stroke="#2c6ca8" strokeWidth="2.500" /><path d="M13 20l6-6v6z" fill="#8cc850" />
      </TaskButton>
      <div className="flex-1" />
      <span className="mr-4 text-white">IT</span>
      <svg viewBox="0 0 142 12" className="h-3 w-[142px] shrink-0" aria-hidden="true">
        <path d="M1 1h10v10H1z" fill="#222" /><path d="M3 5h5M4 8h5" stroke="#fff" />
        <path d="M16 3l4-2 3 3 3 1-1 5-5 1-3-4z" fill="#38a850" /><path d="M18 4h5M18 8h5" stroke="#fff" />
        <path d="M31 4l7 1v4l-5 1z" fill="#ddd" /><path d="M34 3l6 5" stroke="#888" />
        <circle cx="50" cy="6" r="4.500" fill="#78bc2c" /><path d="M48 6l2 2 3-4" stroke="#fff" fill="none" />
        <path d="M60 8l5-5 4 3-4 5z" fill="#ccc" /><path d="M61 10l7-8" stroke="#c33" strokeWidth="1.500" />
        <path d="M74 4h3l4-3v10l-4-3h-3z" fill="#f0a080" stroke="#a33" /><path d="M83 3q2 3 0 6" stroke="#d44" fill="none" />
        <path d="M89 6h3l1-4h3v4h3v5H89z" fill="#f09018" stroke="#a85810" /><path d="M97 1v5" stroke="#fff" />
        <path d="M103 2h8v6h-8zM106 10h5" stroke="#eef" fill="#678" /><path d="M117 4h2l3-3v9l-3-3h-2z" fill="#eee" /><path d="M124 3q2 3 0 5M126 2q3 4 0 7" stroke="#ddd" fill="none" strokeWidth=".8" />
        <path d="M133 1v10" stroke="#fff" /><path d="M133 1l7 2v4l-7-1z" fill="#fff" />
      </svg>
      <div className="w-[48px] text-center leading-[10px] text-white"><div>11:47</div><div>21/02/2015</div></div>
      <button aria-label="Mostra desktop" className="h-full w-[9px] border-l border-[#4c5c74] bg-linear-to-b from-[#5c6c84] to-[#8c9cb4]" />
    </div>
  );
}

export default function App() {
  return (
    <div className="flex h-screen flex-col overflow-hidden bg-[#fbfbfc] font-['Open_Sans','Noto_Sans',sans-serif] text-[7px] leading-[10px] select-none">
      <TitleBar />
      <Ribbon />
      <TopToolbar />
      <main className="flex min-h-0 flex-1">
        <LeftTools />
        <TreePanel />
        <section className="relative min-w-0 flex-[437] overflow-hidden bg-linear-to-b from-[#5050dc] via-[#24247c] via-45% to-[#020224] to-95%">
          <Scene />
          <Dialog />
        </section>
        <RightTools />
      </main>
      <BottomToolbar />
      <StatusBar />
      <Taskbar />
    </div>
  );
}
